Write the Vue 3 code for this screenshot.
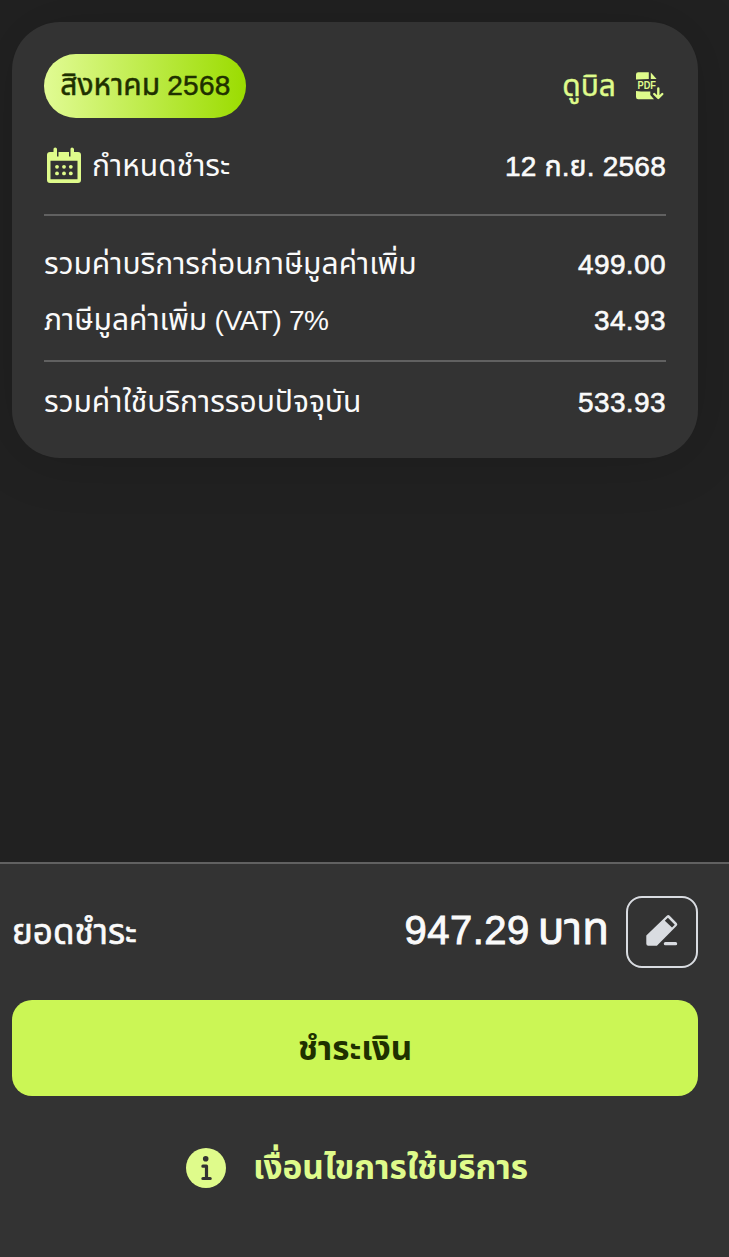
<template>
  <div class="bill-page">
    <main class="content">
      <section class="bill-card">
        <div class="row head-row">
          <span class="month-badge">
            <span class="thai">สิงหาคม</span>
            <span class="year">2568</span>
          </span>
          <a class="view-bill">
            <span class="thai">ดูบิล</span>
            <svg class="pdf-icon" width="32" height="32" viewBox="1 0 32 32">
              <path fill="#dffb8b" d="M3 9.500V4.500Q3 2.300 5.200 2.300H15.800V9Q9 9 3 9.500zM17.800 2.600L23.600 9H17.800z" />
              <path fill="#dffb8b" d="M3 21Q9 21.700 17.300 21.500V25L21 29.300H5.200Q3 29.300 3 27z" />
              <text class="pdf-text" x="4.600" y="18.800" textLength="18.400" lengthAdjust="spacingAndGlyphs">PDF</text>
              <path
                d="M25.300 18.500V27.500M21.200 24L25.300 28L29.300 24"
                fill="none"
                stroke="#dffb8b"
                stroke-width="2.400"
                stroke-linecap="round"
                stroke-linejoin="round"
              />
            </svg>
          </a>
        </div>

        <div class="row due-row">
          <span class="due-label">
            <svg width="40" height="40" viewBox="0 0 40 40">
              <path
                fill="#dffb8b"
                fill-rule="evenodd"
                d="M6 6H9.500V3Q9.500 1.500 11.200 1.500T13 3V10.500H14.500V6H25V10.500H26.500V3Q26.500 1.500 28 1.500T30 3V6H34Q37 6 37 9V34Q37 37 34 37H6Q3 37 3 34V9Q3 6 6 6zM6.500 14.800V33.200H33.500V14.800z"
              />
              <g fill="#dffb8b">
                <circle v-for="dot in dots" :key="dot.id" :cx="dot.x" :cy="dot.y" r="1.900" />
              </g>
            </svg>
            <span class="thai">กำหนดชำระ</span>
          </span>
          <span class="value due-date">{{ bill.dueDate }}</span>
        </div>

        <div class="charges">
          <div v-for="item in bill.items" :key="item.label" class="row charge-row">
            <span class="thai">{{ item.label }}<span v-if="item.note" class="note">{{ item.note }}</span></span>
            <span class="value">{{ item.amount }}</span>
          </div>
        </div>

        <div class="row total-row">
          <span class="thai">รวมค่าใช้บริการรอบปัจจุบัน</span>
          <span class="value">{{ bill.total }}</span>
        </div>
      </section>
    </main>

    <footer class="pay-panel">
      <div class="row pay-row">
        <span class="pay-label">ยอดชำระ</span>
        <div class="pay-amount">
          <span class="amount"><span>947.29</span><span class="unit">บาท</span></span>
          <button class="edit-btn" aria-label="แก้ไข">
            <svg width="40" height="40" viewBox="0 0 40 40">
              <path
                fill="#d9dce1"
                fill-rule="evenodd"
                d="M4.300 23.500L24.800 3.700Q26.300 2.300 27.700 3.700L34.700 10.900Q36 12.300 34.700 13.700L14.900 33.700H6.300Q4.300 33.700 4.300 31.700zM22.800 8.700L30 15.600L32.800 12.800L25.900 5.800z"
              />
              <path d="M23.400 31.700H33.600" stroke="#d9dce1" stroke-width="3.200" stroke-linecap="round" />
            </svg>
          </button>
        </div>
      </div>

      <button class="pay-btn">ชำระเงิน</button>

      <a class="terms">
        <svg width="40" height="40" viewBox="0 0 40 40">
          <circle cx="20" cy="20" r="20" fill="#dffb8b" />
          <circle cx="19.700" cy="10.700" r="2.800" fill="#333" />
          <path
            d="M16.900 18.200H20.500V30.500M16.900 30.500H24.200"
            fill="none"
            stroke="#333"
            stroke-width="3.200"
            stroke-linecap="round"
            stroke-linejoin="round"
          />
        </svg>
        <span>เงื่อนไขการใช้บริการ</span>
      </a>
    </footer>
  </div>
</template>

<script setup>
const bill = {
  dueDate: '12 ก.ย. 2568',
  items: [
    { label: 'รวมค่าบริการก่อนภาษีมูลค่าเพิ่ม', amount: '499.00' },
    { label: 'ภาษีมูลค่าเพิ่ม', note: ' (VAT) 7%', amount: '34.93' }
  ],
  total: '533.93'
}

// Calendar day dots, 3 x 2
const dots = [13, 20, 26.8].flatMap((x) =>
  [20.8, 27.4].map((y) => ({ id: `${x}-${y}`, x, y }))
)
</script>

<style>
body {
  background: #212121;
}
</style>

<style scoped>
.bill-page {
  display: flex;
  flex-direction: column;
  height: 1257px;
  overflow: hidden;
  background: #212121;
  color: #fafafa;
  font-family: "Liberation Sans", "Noto Sans Thai", "Noto Sans", sans-serif;
  font-size: 28px;
  line-height: 40px;
  white-space: nowrap;
}

.content {
  flex: 1;
  padding: 22px 31px 0 12px;
}

.row {
  display: flex;
  align-items: center;
  justify-content: space-between;
}

.thai {
  font-size: 30px;
}

.bill-card {
  box-sizing: border-box;
  height: 436px;
  padding: 32px;
  border-radius: 48px;
  background: #333;
  box-shadow: 0 0 60px rgba(0, 0, 0, 0.16);
}

.head-row {
  height: 64px;
}

.month-badge {
  display: flex;
  align-items: baseline;
  justify-content: center;
  gap: 7px;
  box-sizing: border-box;
  width: 202px;
  height: 64px;
  padding: 11px 0 0 1px;
  border-radius: 32px;
  background: linear-gradient(90deg, #e1fb94, #9bdc00);
  color: #1f3000;
  -webkit-text-stroke: 0.5px #1f3000;
}

.year {
  letter-spacing: 0.3px;
}

.view-bill {
  display: flex;
  align-items: center;
  gap: 18px;
  color: #dffb8b;
  -webkit-text-stroke: 0.4px #dffb8b;
}

.pdf-icon {
  -webkit-text-stroke: 0;
}

.pdf-text {
  fill: #dffb8b;
  font-size: 10px;
  font-weight: 700;
}

.due-row {
  height: 96px;
  border-bottom: 2px solid #616161;
}

.due-label {
  display: flex;
  align-items: center;
  gap: 8px;
}

.value {
  padding-top: 2px;
  -webkit-text-stroke: 0.6px #fafafa;
  letter-spacing: 0.4px;
}

.due-date {
  letter-spacing: 0.25px;
}

.note {
  font-size: 28px;
  letter-spacing: -0.4px;
}

.charges {
  padding: 20px 0 12px;
  border-bottom: 2px solid #616161;
}

.charge-row {
  height: 56px;
}

.total-row {
  height: 80px;
}

.pay-panel {
  box-sizing: border-box;
  height: 395px;
  padding: 32px 31px 0 12px;
  border-top: 2px solid #616161;
  background: #333;
}

.pay-row {
  height: 72px;
}

.pay-label {
  font-size: 35px;
  -webkit-text-stroke: 0.6px #fafafa;
}

.pay-amount {
  display: flex;
  align-items: center;
  gap: 17px;
  font-size: 40px;
  -webkit-text-stroke: 0.9px #fafafa;
}

.amount {
  display: flex;
  align-items: baseline;
  gap: 8px;
  padding-bottom: 6px;
  letter-spacing: 0.5px;
}

.unit {
  font-size: 44px;
  letter-spacing: 0;
}

.edit-btn {
  display: flex;
  align-items: center;
  justify-content: center;
  box-sizing: border-box;
  width: 72px;
  height: 72px;
  padding: 0;
  border: 2px solid #d9dce1;
  border-radius: 16px;
  background: transparent;
}

.pay-btn {
  display: flex;
  align-items: center;
  justify-content: center;
  width: 100%;
  height: 96px;
  margin: 32px 0 52px;
  padding: 2px 0 0;
  border: none;
  border-radius: 20px;
  background: #cbf655;
  color: #1f3000;
  font: inherit;
  font-size: 33.2px;
  font-weight: 700;
}

.terms {
  display: flex;
  align-items: center;
  gap: 27px;
  margin-left: 174px;
  color: #dffb8b;
  font-size: 33.4px;
  font-weight: 700;
}
</style>
